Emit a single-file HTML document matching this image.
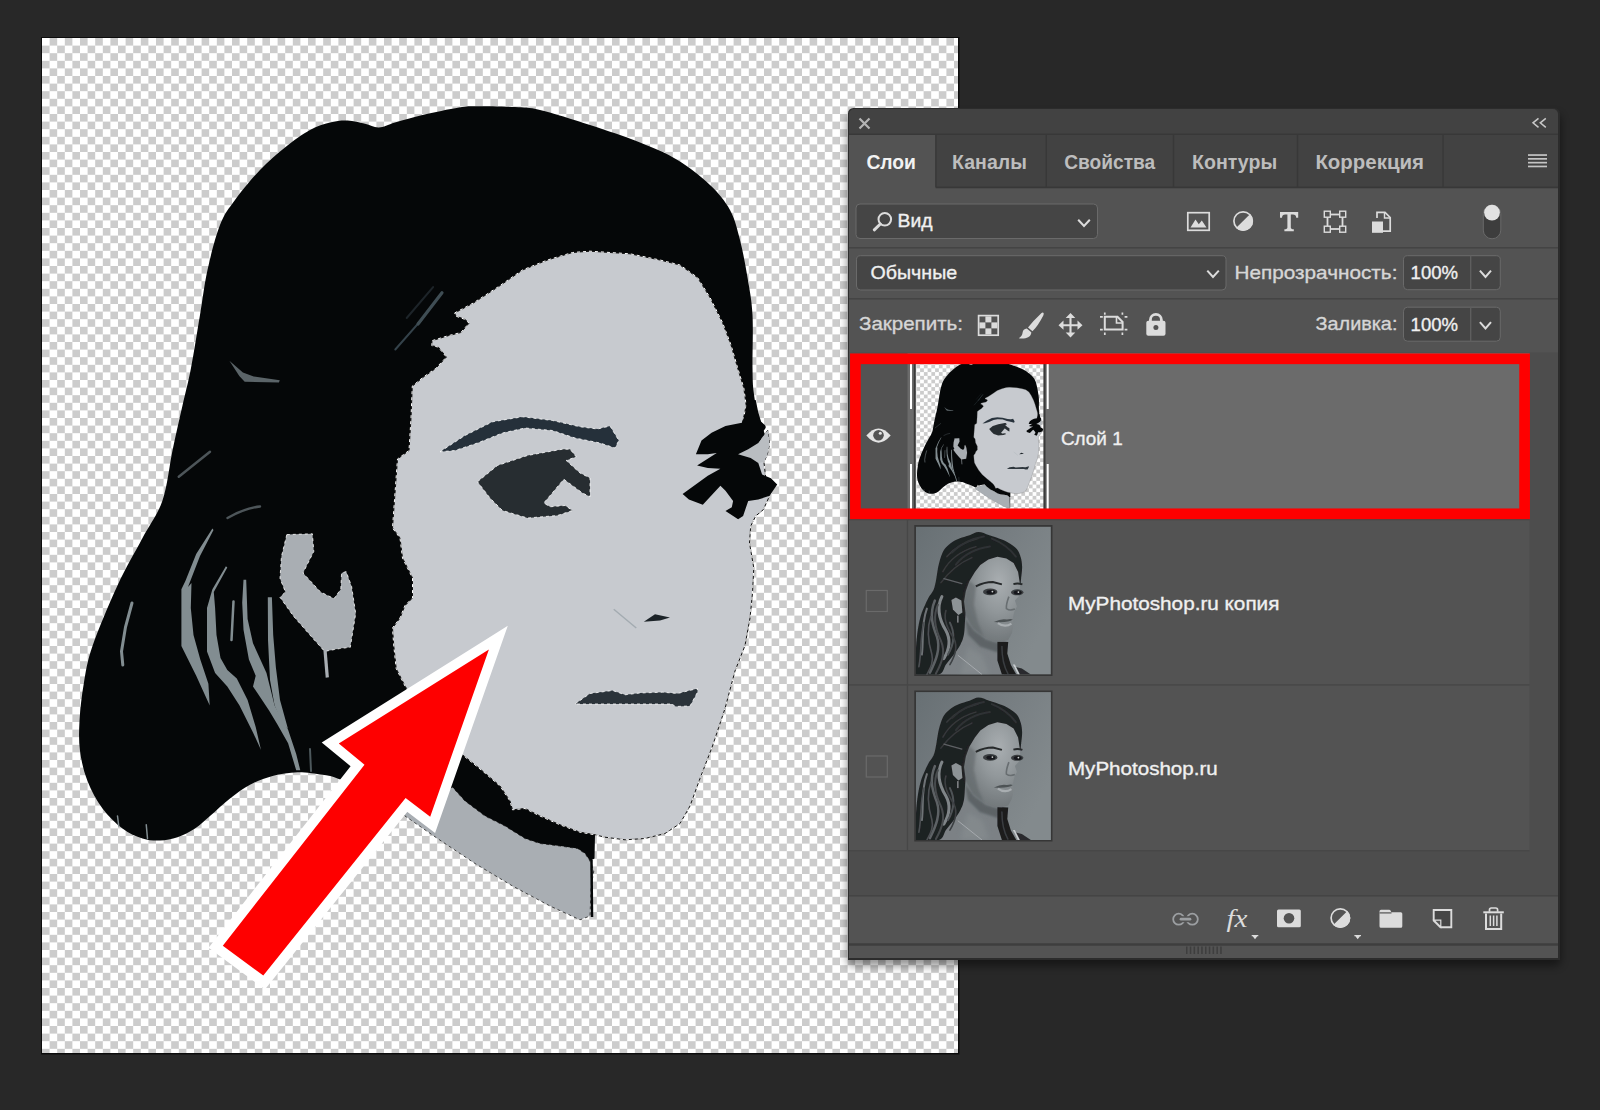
<!DOCTYPE html>
<html lang="ru"><head><meta charset="utf-8"><title>Слои</title>
<style>
html,body{margin:0;padding:0;background:#282828;}
body{width:1600px;height:1110px;overflow:hidden;font-family:"Liberation Sans",sans-serif;}
svg{display:block;position:absolute;left:0;top:0}
text{font-family:"Liberation Sans",sans-serif;}
</style></head><body>
<svg width="1600" height="1110" viewBox="0 0 1600 1110">
<defs>
<pattern id="chk" x="42" y="38" width="15.2" height="15.2" patternUnits="userSpaceOnUse">
<rect width="15.2" height="15.2" fill="#fff"/><rect x="7.6" width="7.6" height="7.6" fill="#ccc"/><rect y="7.6" width="7.6" height="7.6" fill="#ccc"/>
</pattern>
<pattern id="chk2" x="912.6" y="364.6" width="7.5" height="7.5" patternUnits="userSpaceOnUse">
<rect width="7.5" height="7.5" fill="#fff"/><rect x="3.75" width="3.75" height="3.75" fill="#ccc"/><rect y="3.75" width="3.75" height="3.75" fill="#ccc"/>
</pattern>
<filter id="sh" x="-10%" y="-10%" width="120%" height="120%"><feGaussianBlur stdDeviation="4"/></filter>
<filter id="b0"><feGaussianBlur stdDeviation="0.7"/></filter>
<filter id="b1"><feGaussianBlur stdDeviation="1.2"/></filter>
<filter id="b2"><feGaussianBlur stdDeviation="2.5"/></filter>
<clipPath id="cv"><rect x="42" y="38" width="916" height="1015"/></clipPath>
<clipPath id="t1"><rect x="915.8" y="363" width="127.6" height="146"/></clipPath>
<g id="art">
<path d="M80.0,751.0C78.7,741.0 78.9,732.2 79.5,721.0C80.1,709.8 81.6,696.0 83.8,683.5C85.9,671.0 86.9,662.3 92.5,646.0C98.1,629.7 109.2,603.5 117.5,585.5C125.8,567.5 135.0,552.2 142.5,538.0C150.0,523.8 157.5,515.1 162.5,500.5C167.5,485.9 169.2,466.3 172.5,450.5C175.8,434.7 179.4,419.2 182.5,405.5C185.6,391.8 188.1,383.1 191.0,368.0C193.9,352.9 197.2,331.3 200.0,315.0C202.8,298.7 204.2,285.0 207.5,270.0C210.8,255.0 215.4,236.7 220.0,225.0C224.6,213.3 228.3,209.2 235.0,200.0C241.7,190.8 251.7,178.8 260.0,170.0C268.3,161.2 276.7,154.2 285.0,147.5C293.3,140.8 302.5,134.2 310.0,130.0C317.5,125.8 323.8,124.1 330.0,122.5C336.2,120.9 341.7,120.3 347.5,120.5C353.3,120.7 359.8,122.6 365.0,123.8C370.2,124.9 373.8,127.7 378.8,127.5C383.8,127.3 387.7,124.6 395.0,122.5C402.3,120.4 411.8,117.5 422.5,115.0C433.2,112.5 449.8,109.0 459.0,107.5C468.2,106.0 468.2,106.3 477.5,106.2C486.8,106.2 504.6,106.4 515.0,107.0C525.4,107.6 527.5,107.0 540.0,110.0C552.5,113.0 573.3,119.6 590.0,125.0C606.7,130.4 625.4,136.7 640.0,142.5C654.6,148.3 665.8,152.9 677.5,160.0C689.2,167.1 701.2,176.7 710.0,185.0C718.8,193.3 725.0,200.8 730.0,210.0C735.0,219.2 737.1,228.8 740.0,240.0C742.9,251.2 745.4,265.0 747.5,277.5C749.6,290.0 751.7,300.0 752.5,315.0C753.3,330.0 752.3,354.5 752.5,367.5C752.7,380.5 752.7,384.6 753.8,393.0C754.8,401.4 756.9,412.0 758.8,418.0C760.6,424.0 768.1,424.5 765.0,429.0C761.9,433.5 750.8,436.5 740.0,445.0C729.2,453.5 730.0,454.2 700.0,480.0C670.0,505.8 603.3,560.0 560.0,600.0C516.7,640.0 465.0,686.7 440.0,720.0C415.0,753.3 420.0,787.5 410.0,800.0C400.0,812.5 392.1,798.6 380.0,795.0C367.9,791.4 347.1,781.9 337.5,778.5C327.9,775.1 329.2,775.8 322.5,774.8C315.8,773.7 305.8,772.0 297.5,772.2C289.2,772.5 280.4,773.9 272.5,776.0C264.6,778.1 257.1,781.0 250.0,784.8C242.9,788.5 236.7,793.3 230.0,798.5C223.3,803.7 215.8,811.0 210.0,816.0C204.2,821.0 200.4,825.0 195.0,828.5C189.6,832.0 183.3,835.2 177.5,837.2C171.7,839.2 165.8,840.3 160.0,840.5C154.2,840.7 148.8,840.5 142.5,838.5C136.2,836.5 129.2,833.5 122.5,828.5C115.8,823.5 108.3,816.4 102.5,808.5C96.7,800.6 91.2,790.6 87.5,781.0C83.8,771.4 81.3,761.0 80.0,751.0Z" fill="#050708"/>
<path d="M400.0,808.0L452.5,787.2L465.0,801.0L485.0,816.0L505.0,826.0L525.0,838.5L540.0,843.5L560.0,846.0L577.5,848.5L585.0,853.5L590.0,861.0L593.8,871.0L591.2,886.0L590.0,916.0L580.0,919.8L550.0,906.0L512.5,886.0L475.0,863.5L437.5,838.5L405.0,816.0Z" fill="#a9aeb3" stroke="#222" stroke-width=".8" stroke-dasharray="3 3"/>
<path d="M591.5,860L592,917" stroke="#050708" stroke-width="2.5" fill="none"/>
<path d="M430.0,700.0L520.0,760.0L600.0,815.0L595.0,834.8L594.5,858.5L590.0,861.0L585.0,853.5L577.5,848.5L560.0,846.0L540.0,843.5L525.0,838.5L505.0,826.0L485.0,816.0L465.0,801.0L452.5,787.2L420.0,795.0L395.0,780.0Z" fill="#050708"/>
<path d="M454.6,313.0L473.5,302.9L498.7,286.5L522.5,270.0L547.5,260.0L572.5,252.5L590.0,251.2L630.0,253.8L660.0,260.0L680.0,265.0L697.5,277.5L710.0,297.5L722.5,322.5L731.0,345.0L737.5,367.5L743.8,388.0L746.2,405.5L742.5,423.0L757.5,443.0L767.7,430.3L769.6,444.1L767.1,455.5L763.9,461.8L766.0,480.0L769.6,495.8L763.3,509.7L755.7,516.0L750.7,526.1L749.5,543.0L753.8,568.0L752.5,593.0L750.0,618.0L745.0,645.5L735.0,671.0L725.0,708.5L712.5,746.0L700.0,778.5L690.0,806.0L680.0,823.5L665.0,833.5L645.0,838.5L625.0,839.8L605.0,837.2L595.0,834.8L580.0,832.2L560.0,824.8L540.0,816.0L525.0,808.5L512.5,809.8L510.0,801.0L500.0,786.0L482.5,771.0L462.5,754.8L440.0,735.0L420.0,710.0L405.0,686.0L396.2,668.5L393.8,646.0L392.5,628.0L400.0,618.0L405.0,605.5L412.5,598.0L412.5,578.0L402.5,558.0L400.0,538.0L392.5,528.0L395.0,493.0L397.5,459.0L409.0,450.5L411.0,418.0L412.3,386.1L423.1,377.3L435.7,368.4L446.4,357.1L438.2,347.0L431.9,345.8L431.9,340.7L448.3,335.7L460.9,332.5L469.1,323.1L464.7,319.3L455.8,316.1Z" fill="#c7cacf" stroke="#111" stroke-width="1"/>
<path d="M454.6,313.0L473.5,302.9L498.7,286.5L522.5,270.0L547.5,260.0L572.5,252.5L590.0,251.2L630.0,253.8L660.0,260.0L680.0,265.0L697.5,277.5L710.0,297.5L722.5,322.5L731.0,345.0L737.5,367.5L743.8,388.0L746.2,405.5L742.5,423.0L757.5,443.0L767.7,430.3L769.6,444.1L767.1,455.5L763.9,461.8L766.0,480.0L769.6,495.8L763.3,509.7L755.7,516.0L750.7,526.1L749.5,543.0L753.8,568.0L752.5,593.0L750.0,618.0L745.0,645.5L735.0,671.0L725.0,708.5L712.5,746.0L700.0,778.5L690.0,806.0L680.0,823.5L665.0,833.5L645.0,838.5L625.0,839.8L605.0,837.2L595.0,834.8L580.0,832.2L560.0,824.8L540.0,816.0L525.0,808.5L512.5,809.8L510.0,801.0L500.0,786.0L482.5,771.0L462.5,754.8L440.0,735.0L420.0,710.0L405.0,686.0L396.2,668.5L393.8,646.0L392.5,628.0L400.0,618.0L405.0,605.5L412.5,598.0L412.5,578.0L402.5,558.0L400.0,538.0L392.5,528.0L395.0,493.0L397.5,459.0L409.0,450.5L411.0,418.0L412.3,386.1L423.1,377.3L435.7,368.4L446.4,357.1L438.2,347.0L431.9,345.8L431.9,340.7L448.3,335.7L460.9,332.5L469.1,323.1L464.7,319.3L455.8,316.1Z" fill="none" stroke="#fff" stroke-width="1" stroke-dasharray="3 3"/>
<path d="M738.1,454.2L748.2,449.2L758.3,442.9L764.6,434.0L767.7,430.3L769.6,444.1L767.1,455.5L763.9,461.8L758.3,463.1L750.7,458.0Z" fill="#b9bdc1"/>
<path d="M746.9,400.0L745.7,412.6L741.9,422.7L725.5,425.9L711.6,432.8L701.5,440.4L695.9,454.2L707.8,454.2L716.7,453.0L697.1,465.6L707.8,468.1L720.4,468.7L707.8,475.7L682.6,493.9L688.9,499.6L702.8,504.7L720.4,485.8L725.5,490.8L733.1,500.9L731.8,507.2L725.5,511.0L738.1,519.2L743.1,516.0L748.2,500.9L758.3,499.6L769.6,495.8L777.2,484.5L770.9,478.2L762.1,474.4L758.3,463.1L750.7,458.0L738.1,454.2L748.2,449.2L758.3,442.9L764.6,434.0L762.7,427.1L758.3,412.6L755.7,400.0Z" fill="#050708"/>
<path d="M286.8,534.6L312.4,533.8L313.8,551.4L303.0,573.0L320.5,591.9L334.0,598.6L340.8,589.2L341.6,573.0L346.2,571.6L351.6,586.5L355.7,613.5L350.3,647.3L339.5,648.6L324.6,651.4L312.4,637.8L293.5,616.2L280.0,597.3L285.4,591.9L280.0,578.4L281.4,556.8Z" fill="#a9aeb3" stroke="#fff" stroke-width=".8" stroke-dasharray="3 3"/>
<path d="M325,650L327.300,677.500" stroke="#a9aeb3" stroke-width="3.2"/>
<path d="M212.4,528.4L196.2,554.0L185.4,581.0L181.4,589.2L181.4,646.0L196.2,675.7L209.7,705.4L208.4,683.8L200.3,659.5L193.5,635.0L190.8,608.0L191.5,583.0L188.0,587.0L200.0,556.0L213.5,530.0Z" fill="#828d91"/>
<path d="M225.9,566.2L212.4,589.2L207.0,608.1L207.0,651.4L215.1,673.0L227.3,686.5L239.5,705.4L253.0,732.4L261.0,750.0L255.7,727.0L247.6,700.0L236.8,678.4L227.3,670.0L220.5,658.0L216.5,635.1L215.1,608.1L213.8,591.9L227.3,567.6Z" fill="#828d91"/>
<path d="M243.5,579.7L246.2,579.7L247.6,619.0L253.0,643.2L266.5,673.0L269.2,683.8L274.6,705.4L288.1,729.7L296.2,754.0L300.3,770.3L296.2,770.3L288.1,743.2L277.3,724.3L269.2,710.8L258.4,694.6L253.0,686.5L255.7,675.7L248.9,659.5L243.5,629.7L242.2,602.7Z" fill="#828d91"/>
<path d="M267.8,597.3L271.9,597.3L273.2,635.1L275.9,667.6L280.0,700.0L288.0,729.0L282.0,722.0L274.6,705.4L270.0,680.0L268.0,640.0Z" fill="#828d91"/>
<path d="M229.4,360.7L242.9,372.5L253.7,376.5L279.8,380.3L278.9,382.5L244.7,381.8L239.3,376.0Z" fill="#5b6468"/>
<g fill="none" stroke="#828d91" stroke-linecap="round">
<path d="M178.75,476.75L210,451.75" stroke-width="2.5" stroke="#4d5559"/>
<path d="M227.5,518Q245,508 260,506.500" stroke-width="2.500" stroke="#4d5559"/>
<path d="M233.5,601.4L231.5,640" stroke-width="2.5"/>
<path d="M132,603L125.5,627L121.500,651.4L122.800,665" stroke-width="3"/>
<path d="M310,749L311,771" stroke-width="2" stroke="#4d585c"/>
<path d="M117.5,816L118.75,826M146.25,824.75L147.5,838.5" stroke-width="1.5"/>
<path d="M395.300,349.500L421.800,319.300" stroke-width="2" stroke="#34424a"/><path d="M418,324L442,292.800" stroke-width="3.200" stroke="#3f4d54"/>
<path d="M406.700,318L433.100,287.100" stroke-width="2" stroke="#1d2429"/>
</g>
<path d="M440.0,451.8L465.0,435.5L492.5,421.8L522.5,416.8L552.5,420.5L580.0,426.8L597.5,429.0L610.0,426.0L618.8,440.5L615.0,448.0L600.0,443.0L575.0,438.0L552.5,430.5L525.0,428.0L502.5,433.0L477.5,443.0L455.0,450.5Z" fill="#25303a" stroke="#fff" stroke-width=".8" stroke-dasharray="3 3"/>
<path d="M477.5,481.8L497.5,465.5L527.5,455.5L562.5,449.2L570.0,449.2L576.2,456.8L566.2,460.5L580.0,473.0L590.0,478.0L590.0,496.8L582.5,493.0L563.8,479.2L543.8,503.0L550.0,506.8L565.0,505.5L572.5,510.5L557.5,515.5L527.5,518.0L502.5,510.5L490.0,498.0Z" fill="#272d31" stroke="#fff" stroke-width=".8" stroke-dasharray="3 3"/>
<path d="M575.0,704.0L590.0,693.5L612.5,690.5L625.0,694.8L640.0,693.0L662.5,692.2L677.5,693.5L697.5,688.5L697.5,692.2L690.0,706.0L675.0,706.5L672.5,704.0Z" fill="#2b333a" stroke="#fff" stroke-width=".8" stroke-dasharray="3 3"/>
<path d="M643.8,621.8L655.0,614.2L670.0,617.5L660.0,620.5Z" fill="#1c2328"/>
<path d="M613.75,609.25L636.25,628" stroke="#a3abb1" stroke-width="1.5"/>
</g>
<linearGradient id="pbg" x1="0" y1="0" x2="1" y2=".6"><stop offset="0" stop-color="#687074"/><stop offset=".5" stop-color="#767d81"/><stop offset="1" stop-color="#838a8d"/></linearGradient>
<radialGradient id="pfc" cx=".62" cy=".3" r=".75"><stop offset="0" stop-color="#a9aeb1"/><stop offset=".45" stop-color="#92989b"/><stop offset="1" stop-color="#6e7477"/></radialGradient>
<clipPath id="pc"><rect width="135" height="148"/></clipPath>
<g id="photo" clip-path="url(#pc)">
<rect width="135" height="148" fill="url(#pbg)"/>
<g filter="url(#b0)">
<path d="M48.2,75.0L50.0,89.0L57.2,101.6L68.0,110.6L86.0,115.1L88.0,148.0L23.0,148.0L30.2,137.6L37.4,128.6L44.6,117.8L48.2,107.0Z" fill="#7b8185"/>
<path d="M49,92L58,104L70,113L84,117L82,126L64,120L52,108Z" fill="#5d6366" filter="url(#b1)"/>
<path d="M52,120L66,128L74,148L44,148Z" fill="#858b8e" filter="url(#b2)" opacity=".8"/>
<path d="M62.6,5.4C65.9,5.4 69.5,7.3 73.4,8.6C77.3,9.9 82.4,11.5 86.0,13.0C89.6,14.5 92.5,15.9 95.0,17.6C97.5,19.3 99.6,20.8 101.3,23.0C103.0,25.2 104.1,28.2 104.9,31.0C105.7,33.8 106.1,36.7 106.2,40.0C106.3,43.3 105.7,47.9 105.3,50.9C104.9,53.9 105.0,58.1 104.0,58.0C103.0,57.9 101.3,49.7 99.0,50.0C96.7,50.3 94.8,56.7 90.0,60.0C85.2,63.3 76.3,66.7 70.0,70.0C63.7,73.3 55.6,73.8 52.0,80.0C48.4,86.2 49.4,100.7 48.2,107.0C47.0,113.3 46.4,114.2 44.6,117.8C42.8,121.4 39.8,125.3 37.4,128.6C35.0,131.9 32.6,134.4 30.2,137.6C27.8,140.8 28.0,146.3 23.0,148.0C18.0,149.7 3.8,151.8 0.0,148.0C-3.8,144.2 -0.2,131.8 0.0,125.0C0.2,118.2 0.6,113.0 1.4,107.0C2.2,101.0 3.2,94.8 5.0,89.0C6.8,83.2 10.1,76.2 12.2,72.0C14.3,67.8 16.2,66.7 17.6,63.5C19.0,60.3 19.6,56.3 20.3,52.7C21.0,49.1 21.2,45.5 22.0,41.9C22.8,38.3 23.7,34.1 24.8,31.0C25.9,27.9 26.8,25.4 28.4,23.0C30.0,20.6 32.3,18.5 34.7,16.7C37.1,14.9 39.6,13.5 42.8,12.2C45.9,10.8 50.3,9.7 53.6,8.6C56.9,7.5 59.3,5.4 62.6,5.4Z" fill="#1f2022"/>
<path d="M81.5,115.0L92.3,115.5L91.4,126.8L95.0,138.5L100.4,148.0L86.0,148.0L81.5,134.0Z" fill="#1b1c1e"/>
<path d="M98,140L103,148L115,148L106,142Z" fill="#2a2c2e"/><path d="M97,138L102,148L104,148L99,138Z" fill="#c8cccf"/>
<path d="M104.0,57.2L102.2,45.5L97.7,36.5L90.5,32.0L81.5,30.2L72.5,32.9L64.4,38.3L59.0,45.5L53.6,54.5L50.0,64.4L48.2,75.0L50.0,89.0L57.2,101.6L68.0,110.6L77.0,115.1L86.0,115.1L92.3,113.3L95.9,107.0L97.7,98.0L96.8,91.7L98.6,84.5L101.0,80.0L99.0,74.0L104.5,68.0Z" fill="url(#pfc)"/>
<path d="M35.500,73.500L40,71L45.500,74L46.500,86L42.500,88.500L37,83Z" fill="#8d9396"/>
<path d="M42,89V96" stroke="#b5babd" stroke-width="1" fill="none"/>
<g fill="none" stroke-linecap="round">
<path d="M26,70C20,82 24,94 30,104C35,113 34,122 28,132" stroke="#7f8588" stroke-width="3"/>
<path d="M19,74C13,88 17,100 21,110C25,122 20,134 14,146" stroke="#5d6265" stroke-width="2.500"/>
<path d="M11,82C5,98 8,112 6,128" stroke="#6e7376" stroke-width="2"/>
<path d="M34,96C40,108 38,118 32,128" stroke="#4e5356" stroke-width="2"/>
<path d="M31,30C38,22 50,15 62,12M27,45C34,32 46,24 60,20M25,56C34,44 44,36 56,31" stroke="#36393b" stroke-width="1.500"/>
<path d="M28,52L46,57" stroke="#5d6265" stroke-width="1.200"/>
<path d="M22,78C16,92 20,104 25,114C30,126 26,136 20,147" stroke="#474b4e" stroke-width="2"/>
<path d="M8,96C4,110 6,124 3,140M15,90C10,104 13,118 16,128C18,136 14,142 11,148" stroke="#4c5053" stroke-width="1.600"/>
<path d="M30,84C27,94 33,104 38,112C42,120 40,128 34,138" stroke="#3c4043" stroke-width="1.600"/>
<path d="M36,26C44,18 56,12 68,10M40,38C48,28 60,22 74,20M76,12C86,16 94,22 100,30" stroke="#2f3234" stroke-width="2"/>
<path d="M86,120C86,130 88,140 92,147" stroke="#3a3d40" stroke-width="1.500"/>
</g>
<path d="M53.600,54.500L50,64.400L48.200,75L50,89L57.200,101.600L68,110.600L62,96L58,78L60,60Z" fill="#5f6568" opacity=".55" filter="url(#b1)"/>
</g>
<g filter="url(#b0)">
<path d="M59.900,59.800Q68,55.500 77,55.400L86,57.800" stroke="#26292b" stroke-width="2" fill="none"/>
<path d="M97.500,57.500Q102,56.300 106.500,57.800" stroke="#26292b" stroke-width="2" fill="none"/>
<ellipse cx="74.300" cy="65.300" rx="7.200" ry="3.300" fill="#3a3e41"/><ellipse cx="75" cy="65.500" rx="4.500" ry="2.200" fill="#17191a"/>
<ellipse cx="101.300" cy="65.700" rx="6.200" ry="3" fill="#3a3e41"/><ellipse cx="101.800" cy="65.900" rx="4" ry="2" fill="#17191a"/>
<circle cx="76.500" cy="65" r=".9" fill="#d0d3d5"/><circle cx="102.500" cy="65.500" r=".9" fill="#d0d3d5"/>
<path d="M93,70Q90,78 90.500,82Q94,84.500 99,82.500" stroke="#686e71" stroke-width="1.600" fill="none"/>
<path d="M77.900,95.300Q86,91.500 91,93Q95,92 97,93Q92,96.500 77.900,95.300Z" fill="#4d5255"/>
<path d="M82,96.500Q89,101.500 95.500,97" stroke="#a9aeb1" stroke-width="2.200" fill="none"/>
<path d="M41.900,128.600L66.200,148" stroke="#aeb3b6" stroke-width=".8" fill="none"/>
</g>
</g>
</defs>
<rect x="41" y="37" width="918.5" height="1017.5" fill="#0c0c0c"/>
<rect x="42" y="38" width="916" height="1015" fill="url(#chk)"/>
<g clip-path="url(#cv)"><use href="#art"/></g>
<polygon points="488.9,649.4 338.8,743.6 364.5,764.7 222.8,945.7 263.3,975.6 405.6,798 430.2,816.7" fill="#fe0000" stroke="#fff" stroke-width="20" stroke-miterlimit="10" paint-order="stroke" style="paint-order:stroke"/>
<rect x="847" y="114" width="714" height="852" rx="6" fill="#000" opacity=".42" filter="url(#sh)"/>
<path d="M848,960V113.500a5.500,5.500 0 0 1 5.500,-5.500H1554.500a5.500,5.500 0 0 1 5.500,5.500V960Z" fill="#2c2c2c"/>
<path d="M849,187.500V114a5,5 0 0 1 5,-5H1553a5,5 0 0 1 5,5V187.500Z" fill="#424242"/>
<rect x="849" y="133.500" width="709" height="1.500" fill="#383838"/>
<rect x="849" y="188" width="709" height="770" fill="#535353"/>
<rect x="935.500" y="186.500" width="622.500" height="1.800" fill="#383838"/>
<rect x="849" y="135" width="86.500" height="54" fill="#535353"/>
<rect x="935.2" y="135" width="1.400" height="52" fill="#383838"/>
<rect x="1045.6" y="135" width="1.400" height="52" fill="#383838"/>
<rect x="1172.8" y="135" width="1.400" height="52" fill="#383838"/>
<rect x="1296.8" y="135" width="1.400" height="52" fill="#383838"/>
<rect x="1442.4" y="135" width="1.400" height="52" fill="#383838"/>
<path d="M859.500,118.500L869.500,128.500M869.500,118.500L859.500,128.500" stroke="#b4b4b4" stroke-width="2.200" fill="none"/>
<path d="M1538.500,118.300L1533,122.800L1538.500,127.300M1545.800,118.300L1540.300,122.800L1545.800,127.300" stroke="#c8c8c8" stroke-width="1.500" fill="none"/>
<rect x="1528" y="154.2" width="19" height="1.700" fill="#c4c4c4"/>
<rect x="1528" y="158.0" width="19" height="1.700" fill="#c4c4c4"/>
<rect x="1528" y="161.8" width="19" height="1.700" fill="#c4c4c4"/>
<rect x="1528" y="165.6" width="19" height="1.700" fill="#c4c4c4"/>
<text x="866.4" y="169.3" font-size="20" fill="#f2f2f2" font-weight="bold" textLength="49.6" lengthAdjust="spacingAndGlyphs">Слои</text>
<text x="952.1" y="169.3" font-size="20" fill="#bdbdbd" font-weight="bold" textLength="74.7" lengthAdjust="spacingAndGlyphs">Каналы</text>
<text x="1064.2" y="169.3" font-size="20" fill="#bdbdbd" font-weight="bold" textLength="91.0" lengthAdjust="spacingAndGlyphs">Свойства</text>
<text x="1192.0" y="169.3" font-size="20" fill="#bdbdbd" font-weight="bold" textLength="85.1" lengthAdjust="spacingAndGlyphs">Контуры</text>
<text x="1315.4" y="169.3" font-size="20" fill="#bdbdbd" font-weight="bold" textLength="108.6" lengthAdjust="spacingAndGlyphs">Коррекция</text>
<rect x="849" y="247.0" width="709" height="1.600" fill="#444444"/>
<rect x="849" y="298.0" width="709" height="1.600" fill="#444444"/>
<rect x="856" y="204" width="241.500" height="34.500" rx="4" fill="#454545" stroke="#6a6a6a" stroke-width="1"/>
<circle cx="884.800" cy="219.300" r="6.300" fill="none" stroke="#dcdcdc" stroke-width="2"/>
<path d="M880.300,224L874.300,229.800" stroke="#dcdcdc" stroke-width="3" stroke-linecap="round"/>
<text x="897.6" y="227.2" font-size="19" fill="#f0f0f0" stroke="#f0f0f0" stroke-width=".35" textLength="35.0" lengthAdjust="spacingAndGlyphs">Вид</text>
<path d="M1078.2,219.8L1084.0,226.0L1089.8,219.8" fill="none" stroke="#dcdcdc" stroke-width="2"/>
<rect x="1187.800" y="212.700" width="21.400" height="17.600" fill="none" stroke="#dcdcdc" stroke-width="1.700"/>
<path d="M1190.500,227.500L1195.500,219.500L1198.800,224.300L1201.800,220.500L1206.500,227.500Z" fill="#dcdcdc"/>
<circle cx="1243.100" cy="221" r="9.200" fill="none" stroke="#dcdcdc" stroke-width="1.700"/>
<path d="M1250.200,213.900A10,10 0 0 1 1236,228.100Z" fill="#dcdcdc"/>
<path d="M1280,212H1298.200V217.800H1296.200Q1296,214.600 1293,214.600H1290.800V227.500Q1290.800,229.300 1293.800,229.300V231.200H1284.400V229.300Q1287.400,229.300 1287.400,227.500V214.600H1285.200Q1282.200,214.600 1282,217.800H1280Z" fill="#dcdcdc"/>
<rect x="1327.500" y="214.500" width="15" height="14.500" fill="none" stroke="#dcdcdc" stroke-width="1.800"/>
<rect x="1324.3" y="211.2" width="6" height="6" fill="#535353" stroke="#dcdcdc" stroke-width="1.400"/>
<rect x="1339.7" y="211.2" width="6" height="6" fill="#535353" stroke="#dcdcdc" stroke-width="1.400"/>
<rect x="1324.3" y="226.2" width="6" height="6" fill="#535353" stroke="#dcdcdc" stroke-width="1.400"/>
<rect x="1339.7" y="226.2" width="6" height="6" fill="#535353" stroke="#dcdcdc" stroke-width="1.400"/>
<path d="M1377,218V212.300H1385L1390.200,217.500V231.200H1383" fill="none" stroke="#dcdcdc" stroke-width="1.700"/>
<path d="M1384.500,212.500V218H1390" fill="none" stroke="#dcdcdc" stroke-width="1.400"/>
<rect x="1372" y="221.500" width="11" height="11.300" fill="#dcdcdc"/>
<rect x="1483.300" y="205" width="17.500" height="33.800" rx="8.700" fill="#3d3d3d" stroke="#6a6a6a" stroke-width="1"/>
<circle cx="1492" cy="212.600" r="7.900" fill="#e2e2e2"/>
<rect x="856.500" y="255.700" width="369.500" height="34.300" rx="4" fill="#454545" stroke="#6a6a6a" stroke-width="1"/>
<text x="870.5" y="279.2" font-size="19" fill="#f0f0f0" stroke="#f0f0f0" stroke-width=".35" textLength="86.7" lengthAdjust="spacingAndGlyphs">Обычные</text>
<path d="M1207.3,270.6L1213.0,277.0L1218.8,270.6" fill="none" stroke="#dcdcdc" stroke-width="2"/>
<text x="1234.5" y="279.2" font-size="19" fill="#d6d6d6" stroke="#d6d6d6" stroke-width=".35" textLength="162.9" lengthAdjust="spacingAndGlyphs">Непрозрачность:</text>
<text x="1315.6" y="330.2" font-size="19" fill="#d6d6d6" stroke="#d6d6d6" stroke-width=".35" textLength="81.8" lengthAdjust="spacingAndGlyphs">Заливка:</text>
<rect x="1403.500" y="255.7" width="96.800" height="34" rx="4" fill="#454545" stroke="#6a6a6a" stroke-width="1"/>
<rect x="1470" y="255.7" width="1.400" height="34" fill="#5e5e5e"/>
<text x="1410.6" y="279.3" font-size="19" fill="#f0f0f0" stroke="#f0f0f0" stroke-width=".35" textLength="47.4" lengthAdjust="spacingAndGlyphs">100%</text>
<path d="M1479.9,270.7L1485.5,276.9L1491.0,270.7" fill="none" stroke="#dcdcdc" stroke-width="2"/>
<rect x="1403.500" y="307.2" width="96.800" height="34" rx="4" fill="#454545" stroke="#6a6a6a" stroke-width="1"/>
<rect x="1470" y="307.2" width="1.400" height="34" fill="#5e5e5e"/>
<text x="1410.6" y="330.8" font-size="19" fill="#f0f0f0" stroke="#f0f0f0" stroke-width=".35" textLength="47.4" lengthAdjust="spacingAndGlyphs">100%</text>
<path d="M1479.9,322.2L1485.5,328.4L1491.0,322.2" fill="none" stroke="#dcdcdc" stroke-width="2"/>
<text x="859.0" y="330.2" font-size="19" fill="#d6d6d6" stroke="#d6d6d6" stroke-width=".35" textLength="104.0" lengthAdjust="spacingAndGlyphs">Закрепить:</text>
<rect x="978.600" y="315.600" width="19.600" height="19.600" fill="none" stroke="#dcdcdc" stroke-width="1.700"/>
<rect x="985.4" y="316.4" width="6" height="6" fill="#dcdcdc"/>
<rect x="979.4" y="322.4" width="6" height="6" fill="#dcdcdc"/>
<rect x="991.4" y="322.4" width="6" height="6" fill="#dcdcdc"/>
<rect x="985.4" y="328.4" width="6" height="6" fill="#dcdcdc"/>
<path d="M1043.300,312.800Q1044.300,313.600 1043.300,315.500Q1038,326 1032.500,331.200L1028,327.600Q1033,321 1041,313.500Q1042.500,312.200 1043.300,312.800Z" fill="#dcdcdc"/>
<path d="M1026.800,328.600L1031.300,332.300Q1031.500,337 1025.500,338.200Q1021.500,338.900 1018.800,338.200Q1022.300,336 1022.600,332.500Q1023,329.300 1026.800,328.600Z" fill="#dcdcdc"/>
<path d="M1070.500,317V333.500M1062,325.200H1079" stroke="#dcdcdc" stroke-width="2.100" fill="none"/>
<path d="M1070.500,313L1075.300,317.900H1065.700ZM1070.500,337.400L1075.300,332.500H1065.700ZM1058.500,325.200L1063.500,320.600V329.800ZM1082.500,325.200L1077.500,320.600V329.800Z" fill="#dcdcdc"/>
<path d="M1104.800,316.800H1117.500L1122.600,322V329.600H1104.800Z" fill="none" stroke="#dcdcdc" stroke-width="2"/>
<path d="M1116.500,317V323H1122.500" fill="none" stroke="#dcdcdc" stroke-width="1.600"/>
<path d="M1100,316.800H1102.800M1124.600,316.800H1127.400M1100,329.600H1102.800M1124.600,329.600H1127.400M1104.800,312.600V314.800M1122.400,312.600V314.800M1104.800,332.400V335M1122.400,332.400V335" stroke="#dcdcdc" stroke-width="1.700" fill="none"/>
<path d="M1150.400,322V319.800A5.500,5.500 0 0 1 1161.400,319.800V322" fill="none" stroke="#dcdcdc" stroke-width="2.800"/>
<rect x="1146.300" y="320.800" width="19.200" height="15" rx="2" fill="#dcdcdc"/>
<circle cx="1155.900" cy="327.600" r="2.500" fill="#535353"/>
<rect x="849" y="352.500" width="709" height="543" fill="#4d4d4d"/>
<rect x="849" y="352.500" width="680.500" height="498" fill="#535353"/>
<rect x="907.500" y="353" width="622" height="166" fill="#6b6b6b"/>
<rect x="849" y="519.0" width="680.500" height="1.300" fill="#474747"/>
<rect x="849" y="684.3" width="680.500" height="1.300" fill="#474747"/>
<rect x="849" y="850.0" width="680.500" height="1.300" fill="#474747"/>
<rect x="906.800" y="519" width="1.300" height="331" fill="#474747"/>
<rect x="913.800" y="362" width="131.700" height="148" fill="#3a3a3a"/>
<rect x="915.800" y="363" width="127.600" height="146" fill="url(#chk2)"/>
<g clip-path="url(#t1)"><use href="#art" transform="translate(902.700,341.700) scale(0.181)"/></g>
<rect x="910.0" y="363" width="2" height="46" fill="#fff"/><rect x="910.0" y="464" width="2" height="45" fill="#fff"/>
<rect x="1046.7" y="363" width="2" height="46" fill="#fff"/><rect x="1046.7" y="464" width="2" height="45" fill="#fff"/>
<rect x="914.300" y="525.0" width="138.200" height="151" fill="#363636"/>
<use href="#photo" transform="translate(915.900,526.6)"/>
<rect x="914.300" y="690.5" width="138.200" height="151" fill="#363636"/>
<use href="#photo" transform="translate(915.900,692.1)"/>
<path d="M866.300,435.600Q878.500,421.500 890.700,435.600Q878.500,449.700 866.300,435.600Z" fill="#e4e4e4"/>
<circle cx="878.500" cy="435.300" r="5.300" fill="#535353"/>
<circle cx="880.300" cy="433.300" r="1.500" fill="#e4e4e4"/>
<rect x="866.300" y="590.5" width="21" height="21" fill="none" stroke="#6a6a6a" stroke-width="1.200"/>
<rect x="866.300" y="756.0" width="21" height="21" fill="none" stroke="#6a6a6a" stroke-width="1.200"/>
<text x="1060.9" y="445.3" font-size="19" fill="#f0f0f0" stroke="#f0f0f0" stroke-width=".35" textLength="61.8" lengthAdjust="spacingAndGlyphs">Слой 1</text>
<text x="1068.0" y="609.8" font-size="19" fill="#f0f0f0" stroke="#f0f0f0" stroke-width=".35" textLength="211.4" lengthAdjust="spacingAndGlyphs">MyPhotoshop.ru копия</text>
<text x="1068.0" y="775.0" font-size="19" fill="#f0f0f0" stroke="#f0f0f0" stroke-width=".35" textLength="149.7" lengthAdjust="spacingAndGlyphs">MyPhotoshop.ru</text>
<rect x="855.400" y="358.800" width="669.200" height="155" fill="none" stroke="#fe0000" stroke-width="10.700"/>
<rect x="849" y="895" width="709" height="63" fill="#535353"/>
<rect x="849" y="895" width="709" height="1.600" fill="#444444"/>
<rect x="849" y="943.300" width="709" height="2.400" fill="#3e3e3e"/>
<rect x="1186.0" y="946.500" width="1.500" height="7.500" fill="#3e3e3e"/>
<rect x="1189.8" y="946.500" width="1.500" height="7.500" fill="#3e3e3e"/>
<rect x="1193.6" y="946.500" width="1.500" height="7.500" fill="#3e3e3e"/>
<rect x="1197.4" y="946.500" width="1.500" height="7.500" fill="#3e3e3e"/>
<rect x="1201.2" y="946.500" width="1.500" height="7.500" fill="#3e3e3e"/>
<rect x="1205.0" y="946.500" width="1.500" height="7.500" fill="#3e3e3e"/>
<rect x="1208.8" y="946.500" width="1.500" height="7.500" fill="#3e3e3e"/>
<rect x="1212.6" y="946.500" width="1.500" height="7.500" fill="#3e3e3e"/>
<rect x="1216.4" y="946.500" width="1.500" height="7.500" fill="#3e3e3e"/>
<rect x="1220.2" y="946.500" width="1.500" height="7.500" fill="#3e3e3e"/>
<circle cx="1178.700" cy="919.200" r="5.500" fill="none" stroke="#9c9fa2" stroke-width="1.800"/>
<circle cx="1192.300" cy="919.200" r="5.500" fill="none" stroke="#9c9fa2" stroke-width="1.800"/>
<rect x="1180" y="916.200" width="11" height="6" fill="#535353"/>
<path d="M1181,919.200H1190" stroke="#9c9fa2" stroke-width="2.700" stroke-linecap="round"/>
<text x="1226.500" y="926.800" font-size="25" font-style="italic" fill="#dcdcdc" textLength="21" lengthAdjust="spacingAndGlyphs" style="font-family:'Liberation Serif',serif">fx</text>
<path d="M1251.700,935H1258.300V936.300H1257.300L1255,939.300L1252.700,936.300H1251.700Z" fill="#dcdcdc"/>
<rect x="1277" y="909.400" width="23.800" height="17.800" rx="1.500" fill="#dcdcdc"/>
<circle cx="1289" cy="918.300" r="5.300" fill="#535353"/>
<circle cx="1340.300" cy="918" r="9.200" fill="none" stroke="#dcdcdc" stroke-width="1.700"/>
<path d="M1347.400,910.900A10,10 0 0 1 1333.200,925.100Z" fill="#dcdcdc"/>
<path d="M1354.400,935H1361V936.300H1360L1357.700,939.300L1355.400,936.300H1354.400Z" fill="#dcdcdc"/>
<path d="M1379.500,913.500V911.200Q1379.500,909.700 1381,909.700H1389Q1390.300,909.700 1390.800,911L1391.300,912.300H1400.800Q1402.300,912.300 1402.300,913.800V926.300Q1402.300,927.800 1400.800,927.800H1381Q1379.500,927.800 1379.500,926.300Z" fill="#dcdcdc"/>
<rect x="1379.500" y="912.300" width="12" height="1.200" fill="#535353"/>
<path d="M1433.700,910H1451.300V927.300H1440.500L1433.700,920.500Z" fill="#464646" stroke="#dcdcdc" stroke-width="1.900"/>
<path d="M1434,920.200H1440.800V927Z" fill="#535353" stroke="#dcdcdc" stroke-width="1.200"/>
<path d="M1483.300,912.300H1503.800" stroke="#dcdcdc" stroke-width="2" fill="none"/>
<path d="M1489.500,911.800V909.800Q1489.500,908 1491.300,908H1495.800Q1497.600,908 1497.600,909.800V911.800" stroke="#dcdcdc" stroke-width="1.700" fill="none"/>
<path d="M1486,913.500V929H1501.200V913.500" stroke="#dcdcdc" stroke-width="2" fill="none"/>
<path d="M1490.300,915.500V926M1493.600,915.500V926M1496.900,915.500V926" stroke="#dcdcdc" stroke-width="1.500" fill="none"/>
</svg>
</body></html>
